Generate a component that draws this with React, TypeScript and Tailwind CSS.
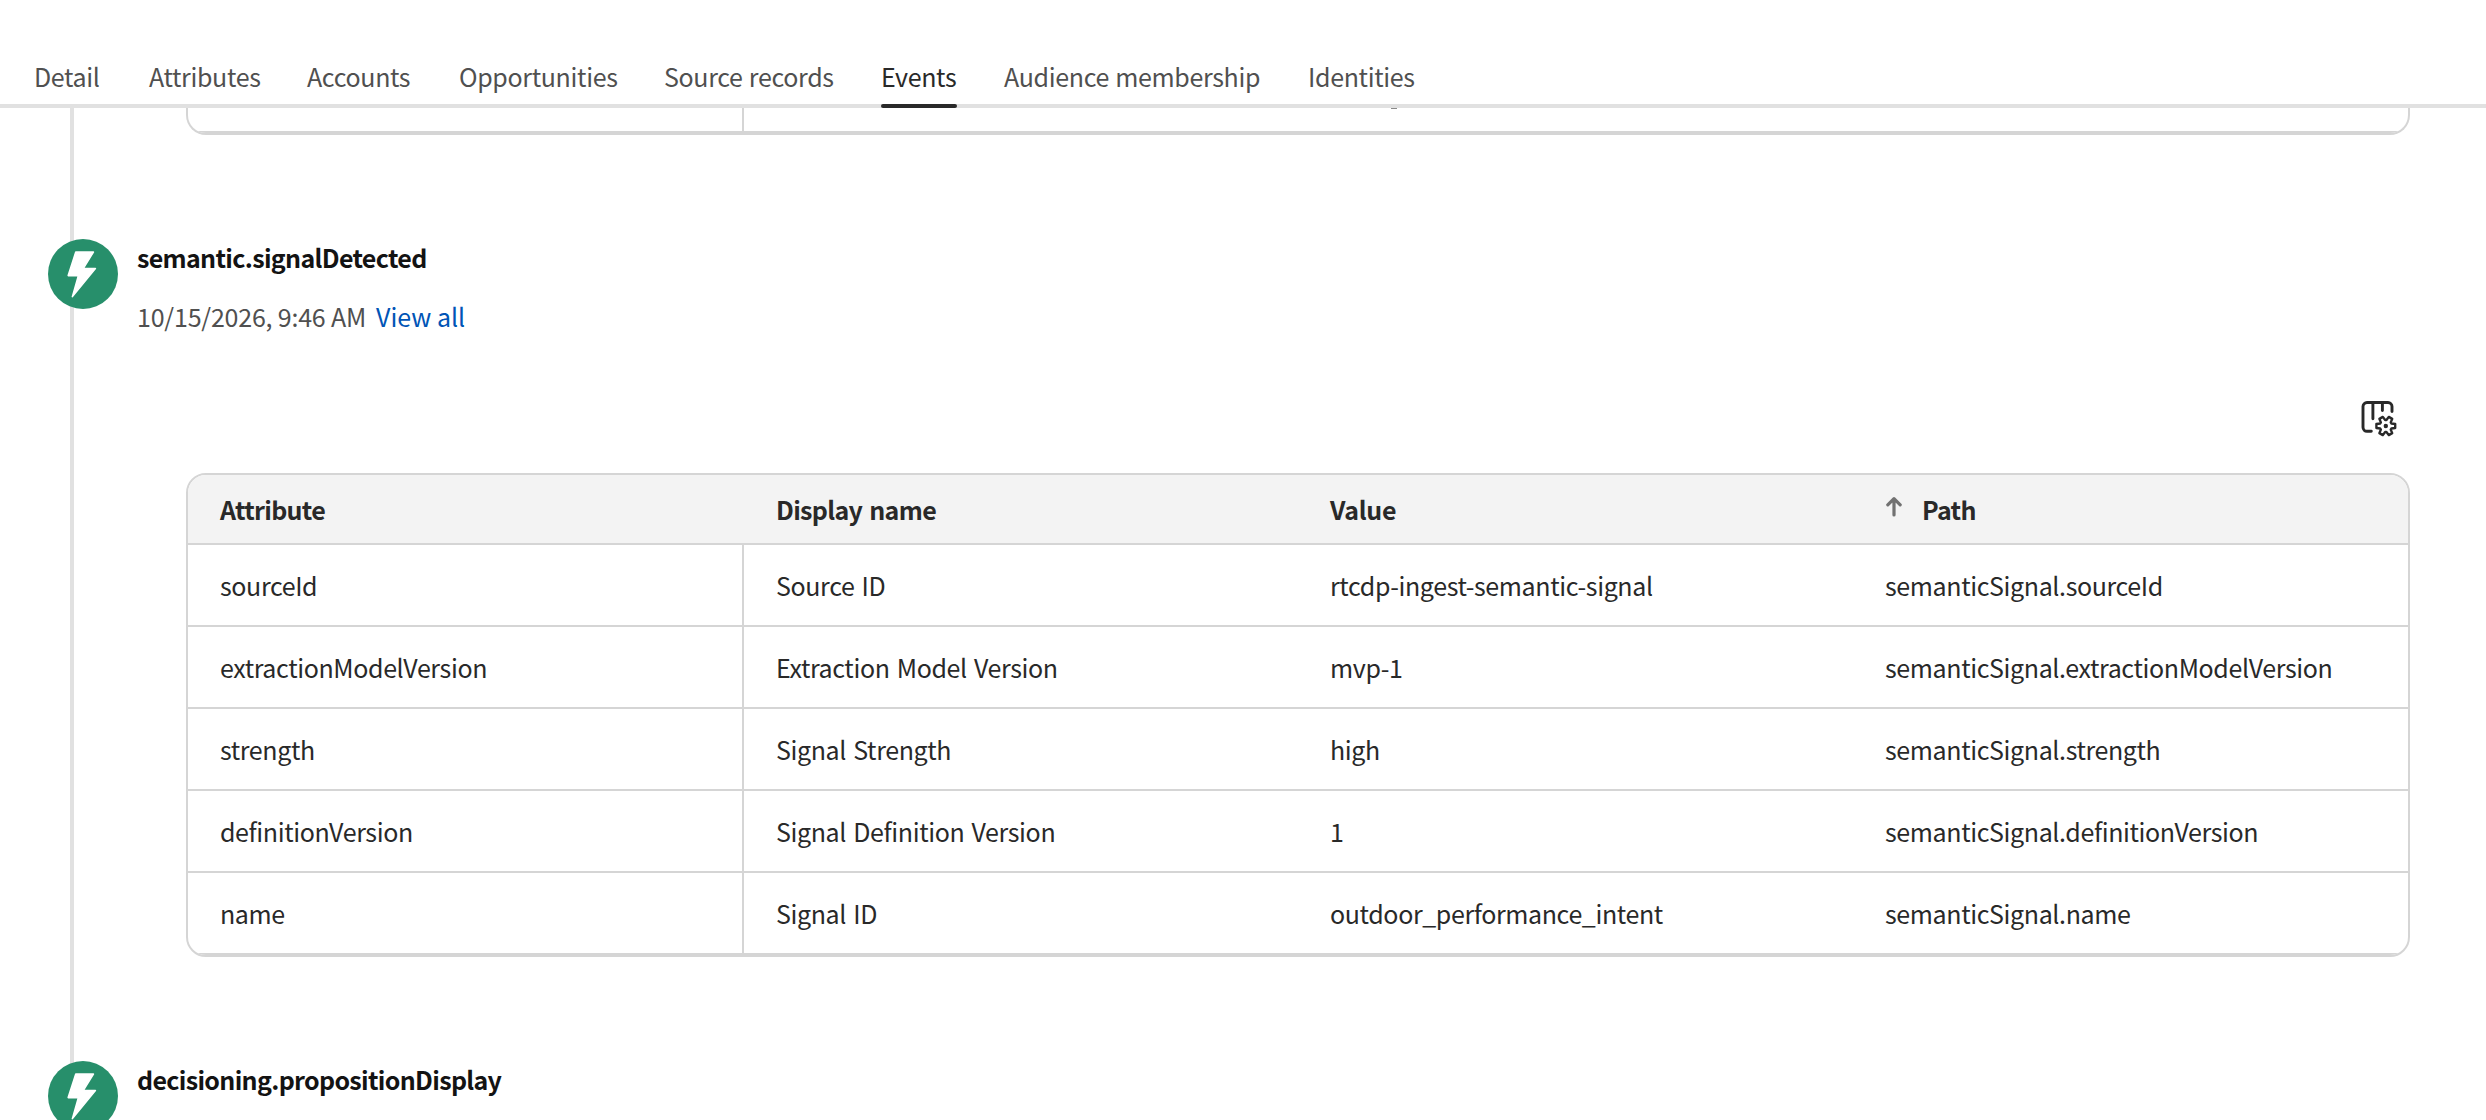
import { useState } from 'react'
import clsx from 'clsx'

interface Attribute {
  attribute: string
  displayName: string
  value: string
  path: string
}

const tabs = [
  { label: 'Detail', width: 'w-[115px]' },
  { label: 'Attributes', width: 'w-[158px]' },
  { label: 'Accounts', width: 'w-[152px]' },
  { label: 'Opportunities', width: 'w-[205px]' },
  { label: 'Source records', width: 'w-[217px]' },
  { label: 'Events', width: 'w-[123px]' },
  { label: 'Audience membership', width: 'w-[304px]' },
  { label: 'Identities', width: 'w-[160px]' },
]

const attributes: Attribute[] = [
  { attribute: 'sourceId', displayName: 'Source ID', value: 'rtcdp-ingest-semantic-signal', path: 'semanticSignal.sourceId' },
  { attribute: 'extractionModelVersion', displayName: 'Extraction Model Version', value: 'mvp-1', path: 'semanticSignal.extractionModelVersion' },
  { attribute: 'strength', displayName: 'Signal Strength', value: 'high', path: 'semanticSignal.strength' },
  { attribute: 'definitionVersion', displayName: 'Signal Definition Version', value: '1', path: 'semanticSignal.definitionVersion' },
  { attribute: 'name', displayName: 'Signal ID', value: 'outdoor_performance_intent', path: 'semanticSignal.name' },
]

// six-toothed gear outline around 0,0
const gearPath = [0, 60, 120, 180, 240, 300]
  .flatMap((angle) =>
    [[-24, 6.1], [-12, 9.6], [12, 9.6], [24, 6.1]].map(([offset, r]) => {
      const rad = ((angle + offset) * Math.PI) / 180
      return `${(r * Math.cos(rad)).toFixed(2)} ${(r * Math.sin(rad)).toFixed(2)}`
    })
  )
  .join('L')

function ColumnSettingsIcon() {
  return (
    <svg width="40" height="40" viewBox="0 0 40 40" fill="none" stroke="#292929" strokeWidth="2.9" strokeLinecap="round" strokeLinejoin="round">
      <path d="M11.3 32.3H7a4 4 0 0 1-4-4V7.5a4 4 0 0 1 4-4h21a4 4 0 0 1 4 4v5" />
      <path d="M12.9 3.5v16.2M22.4 3.5v8" />
      <g transform="translate(25.8 27)">
        <path d={`M${gearPath}Z`} strokeWidth="2.4" />
        <circle r="2.2" fill="#292929" stroke="none" />
      </g>
    </svg>
  )
}

function EventBadge() {
  return (
    <div className="h-[70px] w-[70px] shrink-0 rounded-full bg-[#278f6b]">
      <svg width="70" height="70" viewBox="0 0 70 70" fill="#fff" stroke="#fff" strokeWidth="1.6" strokeLinejoin="round">
        <path d="M27.8 13H45.4L35.2 29.6H47.4L24.4 57.6L30.4 36.6H20.2Z" />
      </svg>
    </div>
  )
}

function EventHeader({ name, time }: { name: string; time?: string }) {
  return (
    <div className="flex h-[160px] gap-[19px] pl-12">
      <EventBadge />
      <div>
        <h3 className="font-bold tracking-[-0.67px] text-[#131313]">{name}</h3>
        {time && (
          <p className="mt-[23px] flex gap-[10px] tracking-[-0.2px] text-[#505050]">
            {time}
            <a href="#" className="tracking-normal text-[#0054b6]">View all</a>
          </p>
        )}
      </div>
    </div>
  )
}

function AttributeTable({ rows }: { rows: Attribute[] }) {
  return (
    <div className="ml-[186px] w-[2224px] overflow-hidden rounded-[20px] border-2 border-[#d5d5d5] text-[#292929]">
      <div className="grid h-[70px] grid-cols-[556px_554px_555px_555px] items-center border-b-2 border-[#d5d5d5] bg-[#f3f3f3] font-bold tracking-[-0.67px] [word-spacing:2px]">
        <div className="pl-8">Attribute</div>
        <div className="pl-8">Display name</div>
        <div className="pl-8 tracking-[-0.3px]">Value</div>
        <div className="flex items-center pl-[33px]">
          <svg width="16" height="22" viewBox="0 0 16 22" className="-mt-1 mr-[20px]" fill="none" stroke="#717171" strokeWidth="3.2" strokeLinecap="round" strokeLinejoin="round">
            <path d="M8 19V3M1.8 8.8L8 2.6L14.2 8.8" />
          </svg>
          Path
        </div>
      </div>
      {rows.map((row) => (
        <div key={row.attribute} className="grid h-[82px] grid-cols-[556px_554px_555px_555px] border-b-2 border-[#d5d5d5] leading-[80px] tracking-[-0.38px] [word-spacing:2px]">
          <div className="border-r-2 border-[#d5d5d5] pl-8">{row.attribute}</div>
          <div className="pl-8">{row.displayName}</div>
          <div className="pl-8">{row.value}</div>
          <div className="pl-8">{row.path}</div>
        </div>
      ))}
    </div>
  )
}

// tail of the previous event's table, scrolled under the tab bar
function PreviousTableEnd() {
  return (
    <div className="ml-[186px] h-[27px] w-[2224px] overflow-hidden rounded-b-[20px] border-2 border-t-0 border-[#d5d5d5]">
      <div className="flex h-[25px] border-b-2 border-[#d5d5d5]">
        <div className="w-[556px] border-r-2 border-[#d5d5d5]" />
        <div className="ml-[647px] h-px w-[6px] bg-[#8a8a8a]" />
      </div>
    </div>
  )
}

export default function App() {
  const [activeTab, setActiveTab] = useState('Events')

  return (
    <div className="h-[1120px] w-[2486px] overflow-hidden bg-white font-['Noto_Sans_CJK_SC',sans-serif] text-[25px] leading-[36px]">
      <nav className="flex h-[108px] items-end border-b-4 border-[#e1e1e1] pl-[34px]">
        {tabs.map((tab) => (
          <div key={tab.label} className={tab.width}>
            <button
              onClick={() => setActiveTab(tab.label)}
              className={clsx(
                'relative block h-[46px] whitespace-nowrap pb-[10px] text-left tracking-[-0.34px] [word-spacing:1px]',
                activeTab === tab.label ? 'text-[#292929]' : 'text-[#505050]'
              )}
            >
              {tab.label}
              {activeTab === tab.label && (
                <span className="absolute -bottom-1 left-0 h-1 w-[76px] rounded-full bg-[#292929]" />
              )}
            </button>
          </div>
        ))}
      </nav>

      <main className="relative">
        <div className="absolute left-[70px] top-0 h-[1012px] w-1 bg-[#e1e1e1]" />
        <div className="relative">
          <PreviousTableEnd />
          <section className="pt-[104px]">
            <EventHeader name="semantic.signalDetected" time="10/15/2026, 9:46 AM" />
            <div className="mb-[34px] flex h-10 justify-end pr-[86px]">
              <button aria-label="Column settings">
                <ColumnSettingsIcon />
              </button>
            </div>
            <AttributeTable rows={attributes} />
          </section>
          <section className="pt-[104px]">
            <EventHeader name="decisioning.propositionDisplay" />
          </section>
        </div>
      </main>
    </div>
  )
}
